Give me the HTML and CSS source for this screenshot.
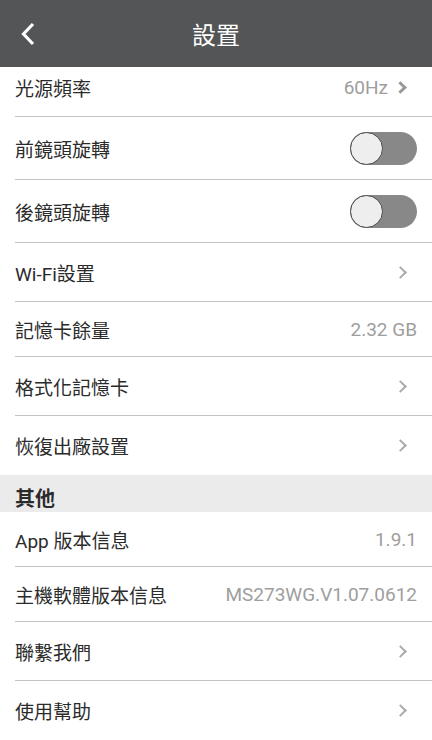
FILE: index.html
```html
<!DOCTYPE html>
<html lang="zh-Hant">
<head>
    <meta charset="UTF-8">
    <meta name="viewport" content="width=device-width, initial-scale=1.0">
    <title>設置</title>
    <link rel="stylesheet" href="styles.css">
</head>
<body>
    <header class="topbar">
        <button class="back" type="button" aria-label="返回">
            <svg width="16" height="24" viewBox="0 0 16 24"><path d="M13 2 L3.5 12 L13 22" fill="none" stroke="#fff" stroke-width="3.2" stroke-linejoin="miter"/></svg>
        </button>
        <h1>設置</h1>
    </header>

    <main class="list">
        <div class="row row-link">
            <span class="label">光源頻率</span>
            <span class="value">60Hz</span>
            <span class="chevron chevron-strong"></span>
        </div>
        <div class="row row-switch">
            <span class="label">前鏡頭旋轉</span>
            <span class="switch"><span class="knob"></span></span>
        </div>
        <div class="row row-switch">
            <span class="label">後鏡頭旋轉</span>
            <span class="switch"><span class="knob"></span></span>
        </div>
        <div class="row row-link">
            <span class="label">Wi-Fi設置</span>
            <span class="chevron"></span>
        </div>
        <div class="row row-info">
            <span class="label">記憶卡餘量</span>
            <span class="value">2.32 GB</span>
        </div>
        <div class="row row-link">
            <span class="label">格式化記憶卡</span>
            <span class="chevron"></span>
        </div>
        <div class="row row-link row-last">
            <span class="label">恢復出廠設置</span>
            <span class="chevron"></span>
        </div>

        <div class="section">其他</div>

        <div class="row row-info">
            <span class="label">App 版本信息</span>
            <span class="value">1.9.1</span>
        </div>
        <div class="row row-info">
            <span class="label">主機軟體版本信息</span>
            <span class="value">MS273WG.V1.07.0612</span>
        </div>
        <div class="row row-link">
            <span class="label">聯繫我們</span>
            <span class="chevron"></span>
        </div>
        <div class="row row-link row-last">
            <span class="label">使用幫助</span>
            <span class="chevron"></span>
        </div>
    </main>
</body>
</html>
```

FILE: styles.css
```css
:root {
    --bar-color: #545557;
    --text-color: #2b2b2b;
    --value-color: #9e9e9e;
    --line-color: #c4c4c4;
    --section-bg: #ebebeb;
    --switch-track: #888;
    --switch-knob: #eee;
}

* {
    box-sizing: border-box;
    margin: 0;
    padding: 0;
}

body {
    font-family: Roboto, "Noto Sans CJK TC", sans-serif;
    color: var(--text-color);
    background-color: #fff;
    overflow: hidden;
}

/* top bar sits over the scrolled list */
.topbar {
    position: relative;
    z-index: 2;
    height: 67px;
    background-color: var(--bar-color);
    display: flex;
    align-items: center;
    justify-content: center;
}

.topbar h1 {
    color: #fff;
    font-size: 24px;
    font-weight: 400;
    margin-top: -1px;
}

.back {
    position: absolute;
    left: 20px;
    top: 22px;
    background: none;
    border: none;
    display: flex;
}

.list {
    margin-top: -9px;
}

.row {
    display: flex;
    align-items: center;
    margin-left: 15px;
    padding-right: 15px;
    border-bottom: 1px solid var(--line-color);
    font-size: 19px;
}

.row-link { height: 59px; }
.row-switch { height: 63px; }
.row-info { height: 55px; }
.row-last { border-bottom: none; }

.label {
    flex: 1;
}

.value {
    color: var(--value-color);
}

.chevron {
    width: 9px;
    height: 9px;
    border-top: 2px solid #aaa;
    border-right: 2px solid #aaa;
    transform: rotate(45deg);
    margin-right: 12px;
}

.value + .chevron {
    margin-left: 8px;
}

.chevron-strong {
    border-color: #999;
    border-width: 3px;
}

.switch {
    width: 67px;
    height: 33px;
    border-radius: 17px;
    background-color: var(--switch-track);
    display: flex;
    align-items: center;
}

.knob {
    width: 33px;
    height: 33px;
    border-radius: 50%;
    background-color: var(--switch-knob);
    border: 1px solid #4a4a4a;
}

.section {
    height: 37px;
    background-color: var(--section-bg);
    padding: 11px 15px 0;
    font-size: 20px;
    font-weight: 700;
    line-height: 26px;
}
```
